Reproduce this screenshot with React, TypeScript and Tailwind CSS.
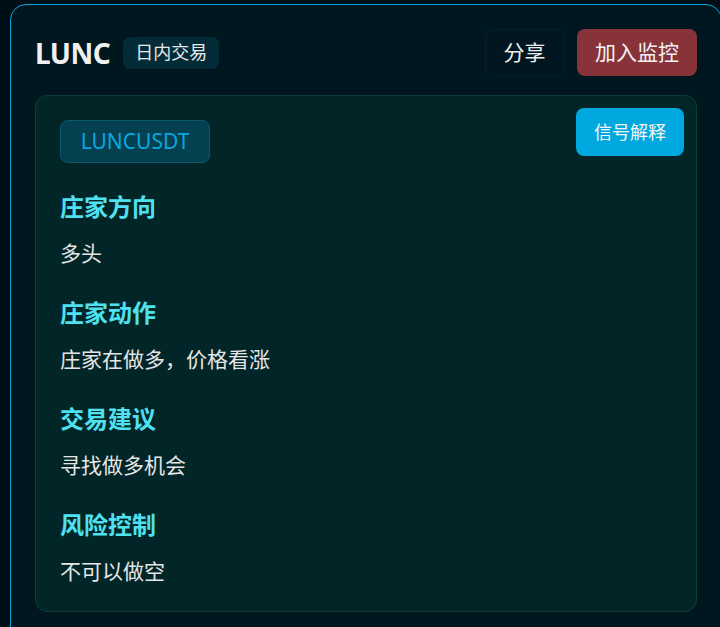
import React from 'react';

const sections = [
    { title: '庄家方向', value: '多头' },
    { title: '庄家动作', value: '庄家在做多，价格看涨' },
    { title: '交易建议', value: '寻找做多机会' },
    { title: '风险控制', value: '不可以做空' },
];

const font = { fontFamily: '"Noto Sans", "Noto Sans CJK SC", sans-serif' };

export default function App() {
    return (
        <div className="w-full h-[627px] overflow-hidden bg-[#000f17] pt-[4px] pl-[10px]" style={font}>
            <div className="w-[712px] min-h-[640px] rounded-[16px] border border-[#0aa3dc] bg-[#001720] px-[24px] pt-[24px]">
                {/* header */}
                <div className="flex items-center justify-between h-[47px]">
                    <div className="flex items-center gap-[13px]">
                        <span className="text-[28px] font-bold text-[#f0f0f0] leading-none tracking-[-0.5px]">LUNC</span>
                        <span className="h-[32px] px-[12px] flex items-center rounded-[7px] bg-[#032c38] text-[18px] text-[#e8e8e8]">日内交易</span>
                    </div>
                    <div className="flex items-center gap-[13px]">
                        <button className="h-[47px] w-[79px] rounded-[8px] border border-[#03202b] bg-[#011620] text-[21px] text-[#ececec]">分享</button>
                        <button className="h-[47px] w-[120px] rounded-[8px] bg-[#88333a] text-[21px] text-[#f2f2f2]">加入监控</button>
                    </div>
                </div>

                {/* signal panel */}
                <div className="relative mt-[19px] w-[662px] rounded-[12px] border border-[#0c3d35] bg-[#022527] px-[24px] pt-[24px] pb-[25px]">
                    <button className="absolute top-[12px] right-[12px] h-[48px] w-[108px] rounded-[8px] bg-[#00a8e0] text-[18px] text-[#f4f4f4]">信号解释</button>
                    <span className="inline-flex h-[43px] w-[150px] items-center justify-center rounded-[8px] border border-[#0b5a70] bg-[#04404f] text-[21px] text-[#0aa6df]">LUNCUSDT</span>
                    <div className="mt-[28px] flex flex-col gap-[29px]">
                        {sections.map(s => (
                            <div key={s.title} className="flex flex-col gap-[15px]">
                                <div className="h-[32px] leading-[32px] text-[24px] font-bold text-[#4fe1f0]">{s.title}</div>
                                <div className="h-[30px] leading-[30px] text-[21px] text-[#e6e6e6]">{s.value}</div>
                            </div>
                        ))}
                    </div>
                </div>
            </div>
        </div>
    );
}
